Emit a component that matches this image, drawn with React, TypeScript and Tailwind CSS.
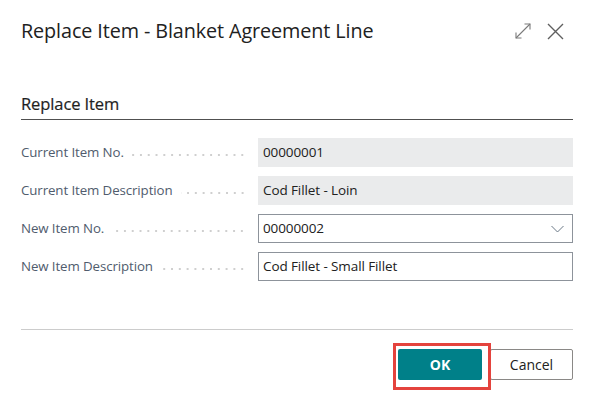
import React from "react";

const rows = [
  { label: "Current Item No.", value: "00000001", kind: "readonly" },
  { label: "Current Item Description", value: "Cod Fillet - Loin", kind: "readonly" },
  { label: "New Item No.", value: "00000002", kind: "lookup" },
  { label: "New Item Description", value: "Cod Fillet - Small Fillet", kind: "edit" },
];

function ExpandIcon() {
  return (
    <svg width="16" height="16" viewBox="0 0 16 16" fill="none" stroke="#7a7a7a" strokeWidth="1.1">
      <path d="M1 15L15 1" />
      <path d="M1 9.5V15H6.5" />
      <path d="M9.5 1H15V6.5" />
    </svg>
  );
}

function CloseIcon() {
  return (
    <svg width="17" height="17" viewBox="0 0 17 17" fill="none" stroke="#5f5f5f" strokeWidth="1.4">
      <path d="M1 1L16 16M16 1L1 16" />
    </svg>
  );
}

function App() {
  return (
    <div
      className="relative w-[593px] h-[400px] bg-white pl-[21px] pr-[20px] text-[#212121]"
      style={{ fontFamily: '"Open Sans", "Noto Sans", sans-serif' }}
    >
      <div className="h-[62px] flex items-center justify-between">
        <h1 className="text-[19.8px] leading-[24px] tracking-[-0.1px] text-[#212121]">
          Replace Item - Blanket Agreement Line
        </h1>
        <div className="flex items-center gap-[16px] mr-[9px]">
          <ExpandIcon />
          <CloseIcon />
        </div>
      </div>

      <div className="mt-[32px] h-[20px] text-[16.5px] leading-[20px] font-medium text-[#1f1f1f] tracking-[-0.1px] [-webkit-text-stroke:0.2px_#1f1f1f]">
        Replace Item
      </div>
      <div className="mt-[5px] h-px bg-[#505050]" />

      <div className="mt-[18px] flex flex-col gap-[9px]">
        {rows.map((row) => (
          <div key={row.label} className="flex items-center h-[29px]">
            <div className="w-[237px] flex items-center pr-[12px]">
              <span className="text-[13.3px] text-[#505c6d] tracking-[-0.1px] whitespace-nowrap">
                {row.label}
              </span>
              <div className="flex-1 ml-[8px] mt-[5px] h-[2px] bg-[radial-gradient(circle,#cfcfcf_0.7px,transparent_1px)] bg-[length:7.8px_2px] bg-right" />
            </div>
            {row.kind === "readonly" ? (
              <div className="flex-1 h-[29px] bg-[#eaebec] pl-[5px] flex items-center text-[13.5px] tracking-[-0.1px]">
                {row.value}
              </div>
            ) : (
              <div className="flex-1 h-[29px] border border-[#8d939b] pl-[4px] flex items-center justify-between text-[13.5px] tracking-[-0.1px]">
                <span>{row.value}</span>
                {row.kind === "lookup" && (
                  <svg width="13" height="8" viewBox="0 0 13 8" fill="none" stroke="#6b7886" strokeWidth="1" className="mr-[8px]">
                    <path d="M0.5 1L6.5 7L12.5 1" />
                  </svg>
                )}
              </div>
            )}
          </div>
        ))}
      </div>

      <div className="mt-[48px] h-px bg-[#cccccc]" />

      <div className="mt-[19px] flex justify-end gap-[8px]">
        <button className="w-[84px] h-[31px] rounded-[2px] bg-[#008089] text-white text-[14px] font-bold">
          OK
        </button>
        <button className="w-[83px] h-[31px] rounded-[2px] border border-[#8a8886] bg-white text-[#212121] text-[14px]">
          Cancel
        </button>
      </div>

      <div className="absolute left-[393px] top-[343px] w-[98px] h-[47px] border-[3px] border-[#e4433d]" />
    </div>
  );
}

export default App;
